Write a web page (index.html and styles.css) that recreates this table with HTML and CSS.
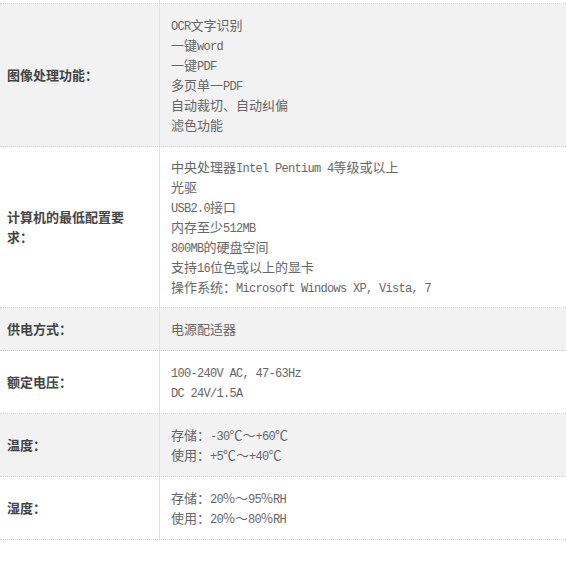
FILE: index.html
```
<!DOCTYPE html>
<html lang="zh-CN">
<head>
<meta charset="utf-8">
<link rel="stylesheet" href="styles.css">
</head>
<body>
<div class="spec">
  <div class="row stub"><div class="label"></div><div class="value"></div></div>
  <div class="row gray">
    <div class="label"><span class="lt">图像处理功能：</span></div>
    <div class="value">
      <div><span class="m">OCR</span>文字识别</div>
      <div>一键<span class="m">word</span></div>
      <div>一键<span class="m">PDF</span></div>
      <div>多页单一<span class="m">PDF</span></div>
      <div>自动裁切、自动纠偏</div>
      <div>滤色功能</div>
    </div>
  </div>
  <div class="row">
    <div class="label"><span class="lt">计算机的最低配置要求：</span></div>
    <div class="value tight">
      <div>中央处理器<span class="m">Intel Pentium 4</span>等级或以上</div>
      <div>光驱</div>
      <div><span class="m">USB2.0</span>接口</div>
      <div>内存至少<span class="m">512MB</span></div>
      <div><span class="m">800MB</span>的硬盘空间</div>
      <div>支持<span class="m">16</span>位色或以上的显卡</div>
      <div>操作系统：<span class="m">Microsoft Windows XP, Vista, 7</span></div>
    </div>
  </div>
  <div class="row gray">
    <div class="label"><span class="lt">供电方式：</span></div>
    <div class="value"><div>电源配适器</div></div>
  </div>
  <div class="row">
    <div class="label"><span class="lt">额定电压：</span></div>
    <div class="value">
      <div><span class="m">100-240V AC, 47-63Hz</span></div>
      <div><span class="m">DC 24V/1.5A</span></div>
    </div>
  </div>
  <div class="row gray">
    <div class="label"><span class="lt">温度：</span></div>
    <div class="value">
      <div>存储：<span class="m">-30</span>℃～<span class="m">+60</span>℃</div>
      <div>使用：<span class="m">+5</span>℃～<span class="m">+40</span>℃</div>
    </div>
  </div>
  <div class="row">
    <div class="label"><span class="lt">湿度：</span></div>
    <div class="value">
      <div>存储：<span class="m">20</span>%～<span class="m">95</span>%<span class="m">RH</span></div>
      <div>使用：<span class="m">20</span>%～<span class="m">80</span>%<span class="m">RH</span></div>
    </div>
  </div>
</div>
</body>
</html>
```
FILE: styles.css
```
html, body {
  margin: 0;
  padding: 0;
  background: #ffffff;
}
body {
  font-family: "Noto Sans CJK SC", "Noto Sans", sans-serif;
  font-size: 13px;
  color: #666666;
}
.spec {
  width: 566px;
}
.row {
  display: flex;
  border-bottom: 1px dotted #cfcfcf;
  background: #ffffff;
}
.row.gray {
  background: #f2f2f2;
}
.row.stub {
  height: 3px;
}
.label {
  width: 152px;
  flex: none;
  padding-left: 7px;
  border-right: 1px solid #e2e2e2;
  display: flex;
  align-items: center;
}
.lt {
  display: block;
  width: 125px;
  font-weight: bold;
  color: #444444;
  line-height: 20px;
}
.value {
  flex: 1;
  padding: 11px 0 11px 11px;
  line-height: 20px;
}
.value.tight {
  padding-top: 10px;
  padding-bottom: 10px;
}
.value > div {
  height: 20px;
  white-space: nowrap;
}
.row.stub .value {
  padding: 0;
}
.m {
  font-family: "Liberation Mono", monospace;
  font-size: 12px;
  letter-spacing: -0.7px;
  line-height: 1;
}
```
